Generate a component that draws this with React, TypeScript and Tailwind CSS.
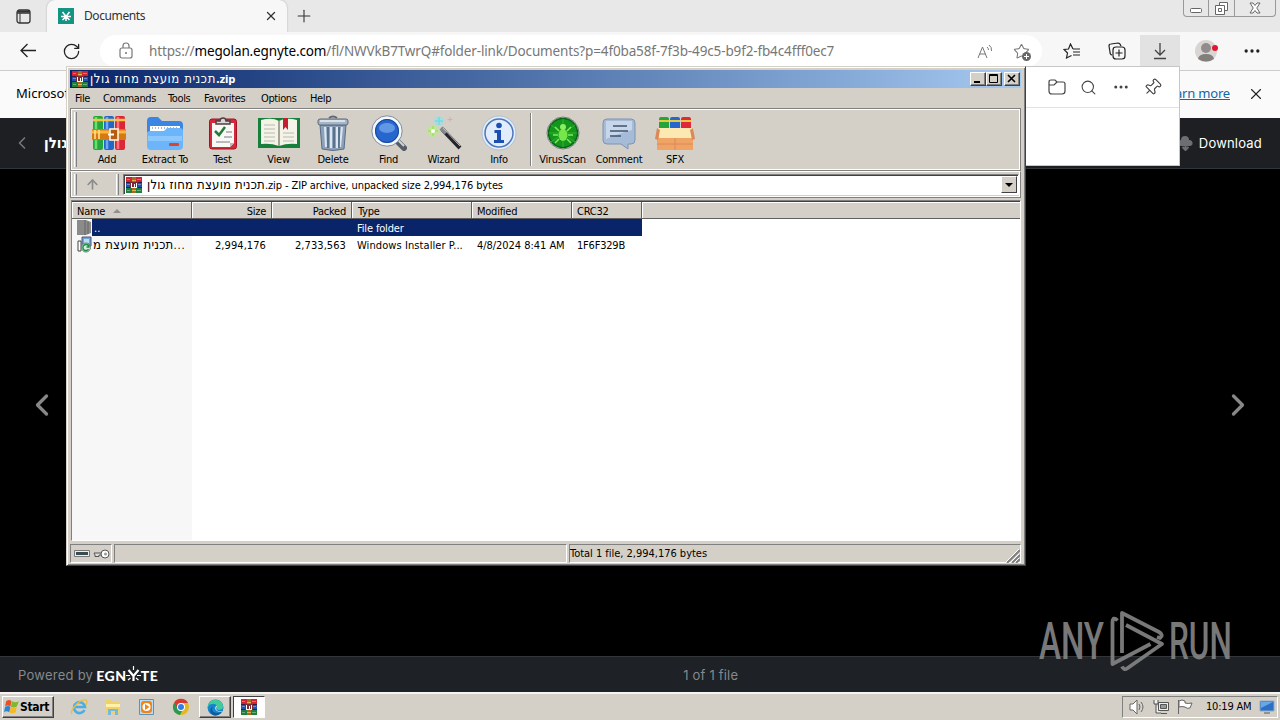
import type { ReactNode } from "react";
import { ArrowUp, ChevronLeft, ChevronRight, Ellipsis, Pin, Plus, RotateCw, Search, Star, X } from "lucide-react";

const archiveName = "תכנית מועצת מחוז גולן";

const menus = [
  { label: "File", width: "w-7" },
  { label: "Commands", width: "w-[65px]" },
  { label: "Tools", width: "w-9" },
  { label: "Favorites", width: "w-[57px]" },
  { label: "Options", width: "w-[49px]" },
  { label: "Help", width: "w-8" },
];

function Books() {
  return (
    <svg width="34" height="34" viewBox="0 0 34 34" className="ml-[3px]">
      <rect x="1" y="0" width="10" height="34" rx="2" fill="#23a83b" />
      <rect x="12" y="0" width="10" height="34" rx="2" fill="#2567c8" />
      <rect x="23" y="0" width="10" height="34" rx="2" fill="#dc2638" />
      <path d="M4 1v32" stroke="#6fdc70" strokeWidth="2.500" />
      <path d="M15 1v32" stroke="#70a9f2" strokeWidth="2.500" />
      <path d="M26 1v32" stroke="#ff7180" strokeWidth="2.500" />
      <path d="M1 4h10M12 4h10M23 4h10" stroke="#f4c640" strokeWidth="2.500" />
      <rect x="0" y="13" width="34" height="11" rx="1" fill="#d57a13" />
      <path d="M0 16h34" stroke="#ffb43c" strokeWidth="3" />
      <path d="M3 14v9M7 14v9" stroke="#ffe08a" strokeWidth="1.600" />
      <rect x="18" y="13" width="8" height="11" fill="#b65c10" stroke="#fff2dc" strokeWidth="1.600" />
      <path d="M16 18.500h6" stroke="#fff" strokeWidth="2" />
    </svg>
  );
}

function RarIcon() {
  return (
    <svg width="16" height="16" viewBox="0 0 16 16" shapeRendering="crispEdges" className="shrink-0">
      <path d="M0 0h16v5H0z" fill="#d4232c" />
      <path d="M0 5h16v5H0z" fill="#2451b4" />
      <path d="M0 10h16v6H0z" fill="#1f7f3d" />
      <path d="M0 5h16M0 10.500h16" stroke="#27204c" />
      <path d="M1 2.500h3m7 0h4M1 7.500h3m8 0h3M1 13.500h3m7 0h4" stroke="#fff" strokeOpacity=".35" />
      <path d="M6 0h4v16H6z" fill="#a86b24" />
      <path d="M6 3h4M6 13h4" stroke="#e1b453" />
      <path d="M4 5h8v6H4z" fill="#7c2938" />
      <path d="M5.500 6v4h5V6M8 7v3" fill="none" stroke="#fff" />
    </svg>
  );
}

function FolderBig() {
  return (
    <svg width="38" height="34" viewBox="0 0 38 34">
      <path d="M1 5q0-4 4-4h7l4 4h17q4 0 4 4v8H1z" fill="#3a86e2" />
      <path d="M4 10h30v9H4z" fill="#fff" />
      <path d="M6 12h26" stroke="#9db6d6" strokeDasharray="1 2" strokeWidth="2" />
      <path d="M1 17q0-2 3-2h14l3-3h13q3 0 3 3v15q0 4-4 4H5q-4 0-4-4z" fill="#6cb5fa" />
      <path d="M2 20h34v5H2z" fill="#9ed2ff" opacity=".65" />
      <rect x="23" y="27" width="10" height="3" rx="1" fill="#dc4329" />
    </svg>
  );
}

function TestIcon() {
  return (
    <svg width="30" height="34" viewBox="0 0 30 34">
      <rect x="1.500" y="3" width="27" height="30" rx="2.500" fill="#d8263a" stroke="#a21424" />
      <path d="M4 7h22v20l-4 4H4z" fill="#f8f8f5" />
      <path d="M8 8V5h4q0-3 3-3t3 3h4v3z" fill="#d9d9d9" stroke="#4d4042" strokeWidth="1.500" />
      <path d="m7 15 4 4 6-8" fill="none" stroke="#227b36" strokeWidth="2.500" />
      <path d="M18 16h6m-8 5h8m-16 5h14" stroke="#a5a5aa" strokeWidth="1.500" />
      <path d="m22 31 4-4h-4z" fill="#bbb" />
    </svg>
  );
}

function ViewIcon() {
  return (
    <svg width="42" height="34" viewBox="0 0 42 34">
      <path d="M0 2h42v30H0z" fill="#16803a" />
      <path d="M3 4q11-3 18 1 7-4 18-1v24q-10-1-18 2-8-3-18-2z" fill="#f4f3e9" />
      <path d="M21 5v25" stroke="#a5a492" strokeWidth="2" />
      <path d="M6 9h11M6 13h11M6 17h11M6 21h11M6 25h11M25 17h11M25 21h11M25 25h11" stroke="#bbb9ac" />
      <path d="M25 2h5v12l-2.500-3-2.500 3z" fill="#c51e30" />
    </svg>
  );
}

function TrashIcon() {
  return (
    <svg width="32" height="36" viewBox="0 0 32 36">
      <path d="M12 3q4-3 8 0" fill="none" stroke="#5c6876" strokeWidth="2" />
      <path d="M3 10h26l-2 24q-11 3-22 0z" fill="#8da2ba" stroke="#5a6c82" />
      <path d="M8 12l1 20M14 12v21M20 12v21M25 12l-2 20" stroke="#dae7f3" strokeWidth="2" />
      <path d="M11 12v21M17 12v21M22 12v21" stroke="#4c637c" strokeWidth="1.500" />
      <rect x="1" y="4" width="30" height="6" rx="2" fill="#a4b5c6" stroke="#5d6977" />
      <path d="M3 6h25" stroke="#e9f2fa" strokeWidth="1.500" />
    </svg>
  );
}

function FindIcon() {
  return (
    <svg width="36" height="36" viewBox="0 0 36 36">
      <path d="m25 25 8 8" stroke="#555c65" strokeWidth="6" strokeLinecap="round" />
      <path d="m26 24 7 7" stroke="#cdd5dd" strokeWidth="2" />
      <circle cx="16" cy="16" r="13.500" fill="#2866cf" stroke="#f5f9fc" strokeWidth="3" />
      <circle cx="16" cy="16" r="15.200" fill="none" stroke="#7d91a5" />
      <circle cx="16" cy="16" r="11.500" fill="none" stroke="#184592" />
      <ellipse cx="16" cy="13" rx="8" ry="5" fill="#75a8ee" opacity=".75" />
    </svg>
  );
}

function WizardIcon() {
  return (
    <svg width="36" height="36" viewBox="0 0 36 36">
      <circle cx="7" cy="16" r="6" fill="#b9ef81" opacity=".6" />
      <path d="M7 11v10M2 16h10" stroke="#9de864" strokeWidth="2" />
      <circle cx="7" cy="16" r="2" fill="#fff" />
      <circle cx="13" cy="6" r="5" fill="#91e3e8" opacity=".6" />
      <path d="M13 2v8M9 6h8" stroke="#70dbe8" strokeWidth="1.500" />
      <path d="M24 2v5M21.500 4.500h5" stroke="#f6a0a5" />
      <path d="m16 14 18 19" stroke="#26262a" strokeWidth="4" />
      <path d="m15 13 5 5" stroke="#85878a" strokeWidth="4" />
      <path d="m17 13 17 18" stroke="#c2c3c7" />
    </svg>
  );
}

function InfoIcon() {
  return (
    <svg width="36" height="36" viewBox="0 0 36 36">
      <circle cx="18" cy="18" r="17" fill="#e4edf8" stroke="#aebfd6" />
      <circle cx="18" cy="18" r="14" fill="#e1edfc" stroke="#4c77b9" strokeWidth="1.500" />
      <circle cx="18" cy="10.500" r="2.800" fill="#1b4fb1" />
      <path d="M13.500 15H20v10h3v3H13v-3h3v-7h-2.500z" fill="#1b4fb1" />
    </svg>
  );
}

function VirusIcon() {
  return (
    <svg width="34" height="36" viewBox="0 0 34 36">
      <circle cx="17" cy="18" r="16" fill="#e3eee2" stroke="#737e73" />
      <circle cx="17" cy="18" r="14.500" fill="#14951d" stroke="#086616" strokeWidth="1.500" />
      <path d="M17 4v28M5 10l24 17M29 10 5 27M3 18h28" stroke="#2eb52e" />
      <ellipse cx="17" cy="20" rx="4.500" ry="6" fill="#76e64b" />
      <circle cx="17" cy="12" r="3" fill="#8bef63" />
      <path d="M13 16 9 12m12 4 4-4M12 20H7m15 0h5m-14 4-4 4m12-4 4 4" stroke="#86eb56" strokeWidth="1.500" />
    </svg>
  );
}

function CommentIcon() {
  return (
    <svg width="34" height="34" viewBox="0 0 34 34">
      <path d="M5 3h24q4 0 4 4v17q0 4-4 4h-3v5l-7-5H5q-4 0-4-4V7q0-4 4-4z" fill="#a5bbd8" stroke="#7d93b1" />
      <path d="M4 5h26v9Q18 17 4 23z" fill="#d5e2f1" opacity=".7" />
      <path d="M11 10h14M8 15h18M8 20h11" stroke="#40536f" strokeWidth="1.700" />
    </svg>
  );
}

function SfxIcon() {
  return (
    <svg width="40" height="36" viewBox="0 0 40 36">
      <rect x="4" y="2" width="10" height="16" rx="2" fill="#24a43b" />
      <rect x="15" y="2" width="10" height="16" rx="2" fill="#2667cd" />
      <rect x="26" y="2" width="10" height="16" rx="2" fill="#dd293a" />
      <path d="M4 6h10M15 6h10M26 6h10" stroke="#e9c93c" strokeWidth="2" />
      <path d="M2 15h36v20H2z" fill="#efa365" />
      <path d="m2 14 2-1h33l2 1-2 9H4z" fill="#fbe9b1" />
      <path d="m2 13-2 11 3 1 2-10zm36 0 2 11-3 1-2-10z" fill="#d9895a" />
      <path d="M20 23v12M2 29h36" stroke="#d98a58" />
    </svg>
  );
}

const tools: { label: string; width: string; icon: ReactNode }[] = [
  { label: "Add", width: "w-[58px]", icon: <Books /> },
  { label: "Extract To", width: "w-[58px]", icon: <FolderBig /> },
  { label: "Test", width: "w-[57px]", icon: <TestIcon /> },
  { label: "View", width: "w-[55px]", icon: <ViewIcon /> },
  { label: "Delete", width: "w-[54px]", icon: <TrashIcon /> },
  { label: "Find", width: "w-[57px]", icon: <FindIcon /> },
  { label: "Wizard", width: "w-[53px]", icon: <WizardIcon /> },
  { label: "Info", width: "w-[58px]", icon: <InfoIcon /> },
];

const moreTools: { label: string; width: string; icon: ReactNode }[] = [
  { label: "VirusScan", width: "w-[57px]", icon: <VirusIcon /> },
  { label: "Comment", width: "w-[56px]", icon: <CommentIcon /> },
  { label: "SFX", width: "w-[56px]", icon: <SfxIcon /> },
];

const columns = [
  { label: "Name", cls: "w-[120px] pl-[4px]" },
  { label: "Size", cls: "w-20 pr-[5px] text-right" },
  { label: "Packed", cls: "w-20 pr-[5px] text-right" },
  { label: "Type", cls: "w-[120px] pl-[5px]" },
  { label: "Modified", cls: "w-[100px] pl-[4px]" },
  { label: "CRC32", cls: "w-[70px] pl-[4px]" },
];

function ToolButton({ label, width, icon }: { label: string; width: string; icon: ReactNode }) {
  return (
    <div className={`flex shrink-0 flex-col items-center ${width}`}>
      <div className="mt-[3px] flex h-9 items-center justify-center">{icon}</div>
      <span className="mt-[2px] leading-[14px] whitespace-nowrap">{label}</span>
    </div>
  );
}

function Grip() {
  return <div className="w-[3px] shrink-0 self-stretch border-r border-l border-r-[#808080] border-l-white" />;
}

function CaptionButton({ children }: { children: ReactNode }) {
  return (
    <div className="flex h-3.5 w-4 items-center justify-center border border-t-white border-r-[#404040] border-b-[#404040] border-l-white bg-[#d4d0c8] shadow-[inset_-1px_-1px_#808080]">
      <svg width="12" height="10" viewBox="0 0 12 10">{children}</svg>
    </div>
  );
}

function ArchiveWindow() {
  return (
    <div className="absolute top-[66px] left-[66px] flex h-[500px] w-[960px] flex-col border border-t-[#d4d0c8] border-r-[#404040] border-b-[#404040] border-l-[#d4d0c8] bg-[#d4d0c8] py-[3px] pr-[4px] pl-[3px] font-['DejaVu_Sans_Condensed','DejaVu_Sans',sans-serif] text-[11px] tracking-[-0.25px] text-black shadow-[inset_1px_1px_#fff,inset_-1px_-1px_#808080]">
      <div className="flex h-[18px] shrink-0 items-center bg-gradient-to-r from-[#0a246a] to-[#a6caf0] pr-px pl-[2px] text-white">
        <RarIcon />
        <span className="ml-[2px] flex-1 font-bold tracking-[-0.15px] whitespace-nowrap">
          <span className="text-[13px] font-normal tracking-[0.58px]">{archiveName}</span>.zip
        </span>
        <CaptionButton><path d="M2 8h6" stroke="#000" strokeWidth="2" /></CaptionButton>
        <CaptionButton><path d="M1.500 .500h8v8h-8zM1.500 1.500h8" fill="none" stroke="#000" /></CaptionButton>
        <div className="w-[2px]" />
        <CaptionButton><path d="m2 1 7 7m0-7L2 8" stroke="#000" strokeWidth="1.600" /></CaptionButton>
      </div>
      <div className="flex h-5 shrink-0 items-center pt-[2px] pl-[5px] tracking-[-0.38px] whitespace-nowrap">
        {menus.map((m) => (
          <span key={m.label} className={m.width}>{m.label}</span>
        ))}
      </div>

      <div className="flex h-[63px] shrink-0 border border-[#808080] py-[3px] pl-[3px] shadow-[inset_1px_1px_#fff,inset_-1px_-1px_#fff]">
        <Grip />
        <div className="ml-px flex">
          {tools.map((t) => <ToolButton key={t.label} {...t} />)}
        </div>
        <div className="mx-[2px] my-[1px] w-[2px] border-l border-[#808080] bg-white" />
        <div className="flex">
          {moreTools.map((t) => <ToolButton key={t.label} {...t} />)}
        </div>
      </div>

      <div className="flex h-[27px] shrink-0 border border-t-white border-[#808080] py-[2px] pr-px pl-[3px] shadow-[inset_1px_0_#fff,inset_-1px_-1px_#fff]">
        <Grip />
        <ArrowUp size={15} strokeWidth={2.6} className="mt-[3px] ml-2 text-[#8b8b8b]" />
        <div className="ml-4 flex"><Grip /></div>
        <div className="ml-[4px] flex h-[21px] flex-1 items-center border border-[#808080] border-r-white border-b-white bg-white pl-[2px] shadow-[inset_1px_1px_#404040]">
          <RarIcon />
          <span className="ml-[5px] flex-1 tracking-[-0.1px] whitespace-nowrap">
            <span className="text-[13px] tracking-[0.2px]">{archiveName}</span>.zip - ZIP archive, unpacked size 2,994,176 bytes
          </span>
          <div className="mr-px flex h-[17px] w-4 items-center justify-center border border-t-white border-r-[#404040] border-b-[#404040] border-l-white bg-[#d4d0c8]">
            <div className="border-x-[4px] border-t-[4px] border-x-transparent border-t-black" />
          </div>
        </div>
      </div>

      <div className="mt-[2px] ml-px flex h-[341px] shrink-0 flex-col border border-[#808080] border-r-white border-b-white bg-white">
        <div className="flex h-[18px] shrink-0 border-t border-b border-t-[#404040] border-b-[#606060] bg-[#d4d0c8] leading-[17px] shadow-[inset_0_1px_#fff]">
          {columns.map((c) => (
            <div key={c.label} className={`h-4 border-r border-l border-r-[#606060] border-l-white pt-px ${c.cls}`}>
              {c.label}
              {c.label === "Name" && <span className="ml-2 inline-block border-x-[4px] border-b-[4px] border-x-transparent border-b-[#909090] align-[2px]" />}
            </div>
          ))}
          <div className="border-l border-white" />
        </div>
        <div className="flex h-[17px] shrink-0 leading-[19px] text-white">
          <div className="flex w-5 bg-[#f7f7f7] pl-[5px]">
            <svg width="14" height="17" viewBox="0 0 14 17">
              <path d="M0 1h9l5 2v11l-5 2H0z" fill="#8b8b8b" />
              <path d="M8 1v15M11 3v12" stroke="#666" />
            </svg>
          </div>
          <div className="flex w-[550px] bg-[#0a246a]">
            <span className="w-[265px] pl-[2px] tracking-normal">..</span>
            <span className="tracking-[-0.15px]">File folder</span>
          </div>
        </div>
        <div className="flex h-[17px] shrink-0 leading-[19px] tracking-[0.08px] whitespace-nowrap">
          <div className="flex w-[120px] bg-[#f7f7f7] pl-[5px]">
            <svg width="16" height="17" viewBox="0 0 16 17" className="shrink-0">
              <path d="M5 1h9v9H5z" fill="#70a5d7" stroke="#557" />
              <path d="M7 3h5v4H7z" fill="#b8dff7" />
              <path d="M1 5h3v10H1z" fill="#fff" stroke="#444" />
              <circle cx="9" cy="11.500" r="4.500" fill="#d7efdf" stroke="#5d7b68" />
              <path d="M11.500 10a3 3 0 1 0 0 3M12 8.500V11H9.500" fill="none" stroke="#188d46" strokeWidth="1.400" />
            </svg>
            <span className="text-[13px] leading-[17px] tracking-[0.25px]">תכנית מועצת מ<span className="text-[11px] tracking-[0.8px]">...</span></span>
          </div>
          <span className="w-20 pr-[6px] text-right">2,994,176</span>
          <span className="w-20 pr-[6px] text-right">2,733,563</span>
          <span className="w-[120px] pl-[5px]">Windows Installer P...</span>
          <span className="w-[100px] pl-[5px] tracking-[-0.04px]">4/8/2024 8:41 AM</span>
          <span className="w-[70px] pl-[5px] tracking-[-0.2px]">1F6F329B</span>
        </div>
        <div className="w-[120px] flex-1 bg-[#f7f7f7]" />
      </div>

      <div className="mt-[3px] flex h-[19px] shrink-0 gap-[2px] leading-[18px]">
        <div className="flex w-[42px] items-center gap-[3px] border border-[#808080] border-r-white border-b-white pl-[3px]">
          <svg width="16" height="8" viewBox="0 0 16 8"><path d="M.5.5h15v6H.5z" fill="#eee" stroke="#777" /><path d="M2 2h12v3H2z" fill="#394d51" /></svg>
          <svg width="17" height="10" viewBox="0 0 17 10"><path d="M1 4h8v2H6v1.500H2V6z" fill="#ddd" stroke="#555" /><circle cx="12" cy="5" r="4" fill="#fff" stroke="#555" /><circle cx="12.500" cy="5" r="1.500" fill="#999" /></svg>
        </div>
        <div className="w-[453px] border border-[#808080] border-r-white border-b-white" />
        <div className="flex flex-1 border border-[#808080] border-r-white border-b-white">
          <span className="flex-1 tracking-[-0.02px]">Total 1 file, 2,994,176 bytes</span>
          <svg width="14" height="14" viewBox="0 0 14 14" className="mt-1"><path d="M1 14 14 1M6 14l8-8M10 14l4-4" stroke="#808080" strokeWidth="2" /><path d="M0 13 13 0M5 13l8-8M9 13l4-4" stroke="#fff" /></svg>
        </div>
      </div>
    </div>
  );
}

function DownloadsPopup() {
  return (
    <div className="absolute top-[66px] left-[1026px] h-[100px] w-[154px] border border-l-0 border-[#c6c6c6] bg-white">
      <div className="flex h-[41px] items-center border-b border-[#e2e2e2] pl-[22px] text-[#444]">
        <svg width="18" height="16" viewBox="0 0 18 16" fill="none" stroke="currentColor" strokeWidth="1.200"><path d="M1 12V3q0-2 2-2h4l2 2h6q2 0 2 2v7q0 3-3 3H4q-3 0-3-3zM1 6h5l3-3" /></svg>
        <Search size={17} strokeWidth={1.5} className="ml-[14px]" />
        <Ellipsis size={18} strokeWidth={2} className="ml-[15px]" />
        <Pin size={19} strokeWidth={1.500} className="ml-[13px] rotate-45" />
      </div>
    </div>
  );
}

function BrowserTop() {
  return (
    <>
      <div className="flex h-8 shrink-0 bg-[#e8e8e8] text-[#333]">
        <div className="flex w-[47px] items-center justify-center">
          <svg width="15" height="15" viewBox="0 0 15 15" fill="none" stroke="#333" className="mr-[1px]"><rect x="1" y="1" width="13" height="13" rx="2.500" strokeWidth="1.300" /><path d="M1 4h13" strokeWidth="1.500" /><path d="M4 4v10" /><path d="M2 2.500h11" strokeWidth="2" /></svg>
        </div>
        <div className="flex w-60 items-center rounded-t-lg bg-[#f7f7f7] pl-[11px] shadow-[0_0_2px_#aaa]">
          <svg width="16" height="16" viewBox="0 0 16 16"><path d="M0 0h16v16H0z" fill="#159484" /><path d="m4.500 4 3.500 4.500L11.500 4M8 8.500V13M3 8.500h10M4.500 12 8 8.500l3.500 3.500" fill="none" stroke="#fff" strokeWidth="1.500" /></svg>
          <span className="ml-[10px] text-xs tracking-[-0.4px]">Documents</span>
          <X size={14} strokeWidth={2.2} className="ml-auto mr-[9px]" />
        </div>
        <Plus size={20} strokeWidth={1.300} className="mt-[6px] ml-[7px]" />
        <div className="ml-auto flex h-[17px] w-[93px] shrink-0 rounded-b border border-t-0 border-[#999] text-[#666]">
          <div className="flex w-[25px] items-center justify-center border-r border-[#999]"><svg width="12" height="5" viewBox="0 0 12 5" className="mt-1"><rect x=".5" y=".5" width="11" height="4" rx="1" fill="#fff" stroke="currentColor" /></svg></div>
          <div className="flex w-[26px] items-center justify-center border-r border-[#999]"><svg width="13" height="13" viewBox="0 0 13 13" fill="#fff" stroke="currentColor"><path d="M4.500 3V.500h8v8H10" /><path d="M.5 3.500h9v9h-9z" /><path d="M3.500 6.500h3v3h-3z" /></svg></div>
          <div className="flex flex-1 items-center justify-center"><svg width="12" height="12" viewBox="0 0 12 12"><path d="M1 1h3l2 2.500L8 1h3L7.800 6l3.200 5H8L6 8.500 4 11H1l3.200-5z" fill="#fff" stroke="currentColor" /></svg></div>
        </div>
        <div className="w-1" />
      </div>

      <div className="flex h-[39px] shrink-0 items-center border-b border-[#ccc] bg-[#f7f7f7] text-[#222]">
        <svg width="18" height="16" viewBox="0 0 18 16" fill="none" stroke="currentColor" strokeWidth="1.300" className="ml-[19px]"><path d="M17 7.500H2M8.500 1 2 7.500 8.500 14" /></svg>
        <RotateCw size={19} strokeWidth={1.600} className="ml-[25px]" />
        <div className="ml-[19px] flex h-8 w-[942px] items-center rounded-full bg-white pl-[19px] text-[#777]">
          <svg width="14" height="17" viewBox="0 0 14 17" fill="none" stroke="currentColor" strokeWidth="1.200" className="mb-[2px]"><rect x="1" y="6" width="12" height="10" rx="2" /><path d="M4 6V4q0-3 3-3t3 3v2" /><circle cx="7" cy="11" r="1" fill="currentColor" stroke="none" /></svg>
          <span className="ml-[16px] text-[13.5px] tracking-[-0.135px] whitespace-nowrap">
            https://<span className="text-black">megolan.egnyte.com</span>/fl/NWVkB7TwrQ#folder-link/Documents?p=4f0ba58f-7f3b-49c5-b9f2-fb4c4fff0ec7
          </span>
          <svg width="16" height="15" viewBox="0 0 16 15" className="ml-auto" fill="none" stroke="currentColor"><path d="M1 14 5.500 3 10 14M2.500 10h6M10 3q1.500 1 1.500 3M12 1q3 2 2.500 6" /></svg>
          <span className="relative mr-3 ml-5">
            <Star size={17} strokeWidth={1.500} />
            <svg width="9" height="9" viewBox="0 0 9 9" className="absolute right-[-1px] bottom-[-1px]"><circle cx="4.500" cy="4.500" r="4.500" fill="#666" /><path d="M4.500 2v5M2 4.500h5" stroke="#fff" /></svg>
          </span>
        </div>
        <svg width="18" height="17" viewBox="0 0 18 17" className="ml-[21px]" fill="none" stroke="#222" strokeWidth="1.200"><path d="M10 6 7.500 1 5.500 6 1 6.500 4.500 10l-1 5 5-2.500M10 6h7M10 9h7M10 12h7" /></svg>
        <svg width="18" height="18" viewBox="0 0 18 18" className="ml-[27px]" fill="none" stroke="#222" strokeWidth="1.200"><path d="M4 13q-2 0-2-3L1 4q0-2 2-2l7-1q2 0 3 3M5 8q0-3 3-3h6q3 0 3 3v6q0 3-3 3H8q-3 0-3-3zM11 7.500v7M7.500 11h7" /></svg>
        <div className="mb-px ml-[14px] flex h-[31px] w-10 items-center justify-center bg-[#e2e2e2]">
          <svg width="14" height="18" viewBox="0 0 14 18" fill="none" stroke="#444" strokeWidth="1.300"><path d="M7 1v12M2 8l5 5 5-5M1 16.500h12" /></svg>
        </div>
        <svg width="24" height="24" viewBox="0 0 24 24" className="ml-[15px]"><circle cx="11" cy="12" r="11" fill="#d8d5d2" /><circle cx="11" cy="9" r="5" fill="#918d8b" /><path d="M3 20q1-5 8-5t8 5q-8 5-16 0z" fill="#817e7c" /><circle cx="20" cy="9" r="3" fill="#e11930" /></svg>
        <Ellipsis size={20} strokeWidth={2} className="ml-[23px]" />
      </div>
    </>
  );
}

function TaskbarIcons() {
  return (
    <div className="flex items-center">
      <svg width="18" height="18" viewBox="0 0 18 18" className="ml-4"><path d="M14.500 12a5.500 5.500 0 1 1 .5-3H5" fill="none" stroke="#4aaee5" strokeWidth="2.600" /><path d="M2 16Q0 14 5 8q6-7 11-6 2 1 0 5" fill="none" stroke="#e9bd3d" strokeWidth="1.300" /></svg>
      <svg width="18" height="18" viewBox="0 0 18 18" className="ml-4"><path d="M2 2h5l1 2h8v12H2z" fill="#eed16b" /><path d="M2 6h14v3H2z" fill="#fff2a8" /><path d="M4 17v-6h10v6h-3v-4H7v4z" fill="#76b9db" /></svg>
      <svg width="18" height="18" viewBox="0 0 18 18" className="ml-4"><path d="M1.500 1.500h14v15h-14z" fill="#b9dcf2" stroke="#5c92ba" /><rect x="3" y="3" width="11" height="12" rx="3" fill="#ef8418" /><circle cx="8.500" cy="9" r="4" fill="#fff" /><path d="m7 6 4.500 3L7 12z" fill="#ef8418" /></svg>
      <svg width="18" height="18" viewBox="0 0 18 18" className="ml-4"><circle cx="9" cy="9" r="8" fill="#e3b91f" /><path d="M2 5a8 8 0 0 1 14 0H9L5 11z" fill="#d73a31" /><path d="m2 5 5 7 4-1-3 6A8 8 0 0 1 2 5z" fill="#2c9951" /><circle cx="9" cy="9" r="4" fill="#fff" /><circle cx="9" cy="9" r="3" fill="#337fe5" /></svg>
      <div className="ml-[9px] flex h-[22px] w-8 items-center justify-center border border-t-white border-r-[#404040] border-b-[#404040] border-l-white shadow-[inset_-1px_-1px_#808080]">
        <svg width="17" height="17" viewBox="0 0 17 17"><circle cx="8.500" cy="8.500" r="8" fill="#1686ce" /><path d="M1 6q3-6 9-5 6 1 6 7 0 3-5 3-2-1-1-3-1-4-5-3-3 0-4 3z" fill="#43cc99" /><path d="M6 7q-3 6 4 7 3 0 5-2-4 6-9 4-6-4 0-9z" fill="#155999" /><path d="M10 7q-2 4 1 5h5q-3 1-6 0-3-2-1-5z" fill="#eaf7f9" /></svg>
      </div>
      <div className="ml-[2px] flex h-[22px] w-8 items-center justify-center border border-[#404040] border-r-white border-b-white bg-white"><RarIcon /></div>
    </div>
  );
}

export default function App() {
  return (
    <div className="relative flex h-[720px] w-[1280px] flex-col overflow-hidden bg-black font-['Noto_Sans','Open_Sans',sans-serif]">
      <BrowserTop />
      <div className="flex h-[47px] shrink-0 items-center bg-[#fafafa] pr-[15px] pb-[2px] pl-4 text-[13px]">
        <span>Microsoft</span>
        <span className="mr-[17px] ml-auto tracking-[-0.18px] text-[#1267a5] underline">Learn more</span>
        <X size={18} strokeWidth={1.500} className="text-[#222]" />
      </div>
      <div className="flex h-[51px] shrink-0 items-center border-b border-[#333639] bg-[#1d1f23] pr-[18px] pl-3 text-white">
        <ChevronLeft size={20} className="text-[#73777b]" />
        <span className="ml-3 font-['DejaVu_Sans_Condensed',sans-serif] text-[15px] font-bold">{archiveName}</span>
        <svg width="15" height="15" viewBox="0 0 15 15" className="ml-auto"><path d="M3 10a3 3 0 0 1 0-6 4 4 0 0 1 8 0 3 3 0 0 1 1 6z" fill="#6b6e72" /><path d="M7.500 6v8m-3-3 3 3 3-3" stroke="#6b6e72" strokeWidth="2" fill="none" /></svg>
        <span className="mt-[2px] ml-[6px] font-[Inter,sans-serif] text-[13px] tracking-[0.2px]">Download</span>
      </div>

      <div className="flex h-[487px] shrink-0 items-center justify-between px-6 text-[#878787]">
        <ChevronLeft size={36} strokeWidth={2.2} className="mt-[-16px]" />
        <ChevronRight size={36} strokeWidth={2.2} className="mt-[-16px]" />
      </div>

      <div className="flex h-9 shrink-0 items-center border-t border-[#333639] bg-[#1e2125] pt-[2px] pl-[18px] font-[Inter,sans-serif] text-[13px] text-[#85898d]">
        <span className="tracking-[0.25px]">Powered by</span>
        <span className="ml-[3px] flex w-[63px] items-center font-[Lato,sans-serif] text-[14px] font-black tracking-[0.6px] text-white">
          EGN
          <svg width="15" height="16" viewBox="0 0 15 16" fill="none" stroke="#fff" className="mt-[-3px] ml-[-1px]"><path d="m2.500 4 5 6 5-6M7.500 9v6" strokeWidth="2.200" /><path d="M7.500 0v4M0 9.500h4m7 0h4M2 14l2.500-2m8 2-2.500-2" strokeWidth="1.200" /></svg>
          TE
        </span>
        <span className="ml-[524px] tracking-[0.2px]">1 of 1 file</span>
      </div>

      <div className="flex h-7 shrink-0 items-center border-t-2 border-[#f4f3ef] bg-[#d4d0c8] pl-[2px]">
        <div className="flex h-[22px] w-[52px] items-center border border-t-white border-r-[#404040] border-b-[#404040] border-l-white pl-px font-['DejaVu_Sans_Condensed',sans-serif] text-[12px] font-bold tracking-[-0.3px] shadow-[inset_-1px_-1px_#808080]">
          <svg width="16" height="16" viewBox="0 0 15 15" className="shrink-0"><path d="M2 2q3-2 5 0L6 7Q3 5 1 7z" fill="#e65222" /><path d="M7.500 2q3 2 6.500 0l-2 5q-3 2-5.500 0z" fill="#7fb72e" /><path d="M1 7.500q3-2 5 0l-1 5q-3-2-5 0z" fill="#2a86d1" /><path d="M6.500 7.500q3 2 5.500 0l-1 5q-3 2-6 0z" fill="#f4ba23" /></svg>
          <span>Start</span>
        </div>
        <TaskbarIcons />
        <div className="mr-[2px] ml-auto flex h-[22px] w-[156px] items-center border border-[#808080] border-r-white border-b-white pl-[6px] font-['DejaVu_Sans_Condensed',sans-serif] text-[11px] tracking-[-0.2px]">
          <svg width="17" height="16" viewBox="0 0 17 16" fill="#fff" stroke="#666"><path d="M1 5h3l4-4v14l-4-4H1z" /><path d="M10 5q2 3 0 6m2-8q4 5 0 10" fill="none" /></svg>
          <svg width="17" height="16" viewBox="0 0 17 16" className="ml-[7px]" fill="#eee" stroke="#555"><path d="M5.500 3.500h10v8h-10zM8 14.500h6M1 1v4h4V1M3 5v9h5" /><path d="M7.500 5.500h6v4h-6z" fill="#999" /></svg>
          <svg width="17" height="16" viewBox="0 0 17 16" className="ml-[7px]" fill="#fff" stroke="#666"><path d="M1.500 1v14M2 2q3-2 6 0v2q3 1 7 0l-2 5q-3 1-5-1-3-1-6 0z" /></svg>
          <span className="ml-[12px] pt-px whitespace-nowrap">10:19 AM</span>
          <svg width="16" height="14" viewBox="0 0 16 14" className="ml-[8px] shrink-0"><path d="M1 1h14v10H1z" fill="#2a70c5" stroke="#91aac7" /><path d="M2 2h12L2 8z" fill="#69a6e7" /><path d="M5 13h6" stroke="#555" /></svg>
        </div>
      </div>

      <ArchiveWindow />
      <DownloadsPopup />

      {/* watermark */}
      <div className="absolute top-[609px] left-[1039px] flex h-[63px] w-[194px] items-center text-[#858585] opacity-90">
        <span className="mt-[2px] w-[71px] origin-left scale-x-[0.635] font-['Roboto',sans-serif] text-[52px] leading-none font-medium">ANY</span>
        <svg width="56" height="62" viewBox="0 0 56 62" fill="none" stroke="currentColor" strokeWidth="3.800" strokeLinejoin="round" className="shrink-0">
          <path d="M7.500 10.500Q3 6 2.500 12v42l38-20" />
          <path d="M12 43V3l37 19q5 3 1 6l-3-1" />
          <path d="M16 15l36 19-35 24.500q-3 2-5-2" />
        </svg>
        <span className="mt-[2px] ml-[3px] origin-left scale-x-[0.605] font-['Roboto',sans-serif] text-[52px] leading-none font-medium">RUN</span>
      </div>
    </div>
  );
}
